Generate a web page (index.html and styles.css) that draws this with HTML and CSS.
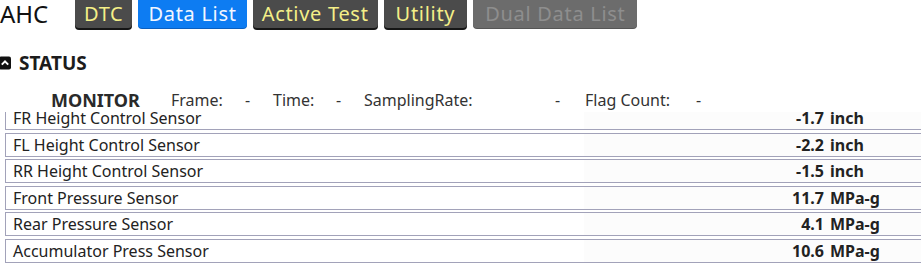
FILE: index.html
```html
<!DOCTYPE html>
<html>
<head>
    <title>AHC Data List</title>
    <link rel="stylesheet" href="styles.css">
</head>
<body>

<div class="topbar">
    <span class="title">AHC</span>
    <button class="tab">DTC</button>
    <button class="tab active">Data List</button>
    <button class="tab">Active Test</button>
    <button class="tab utility">Utility</button>
    <button class="tab disabled">Dual Data List</button>
</div>

<div class="section-head">
    <svg class="toggle" width="12" height="14" viewBox="0 0 12 14">
        <rect x="0" y="0.5" width="12" height="13" rx="2" fill="#111"/>
        <polyline points="2.8,8.6 6,5.4 9.2,8.6" fill="none" stroke="#fff" stroke-width="2"/>
    </svg>
    <span>STATUS</span>
</div>

<div class="monitor">
    <div class="monitor-head">
        <span class="monitor-title">MONITOR</span>
        <span class="stat-label frame">Frame:</span><span class="stat-val">-</span>
        <span class="stat-label time">Time:</span><span class="stat-val">-</span>
        <span class="stat-label rate">SamplingRate:</span><span class="stat-val wide">-</span>
        <span class="stat-label flags">Flag Count:</span><span class="stat-val">-</span>
    </div>

    <div class="rows">
        <div class="row">
            <span class="name">FR Height Control Sensor</span>
            <span class="value"><span class="num">-1.7</span><span class="unit">inch</span></span>
        </div>
        <div class="row">
            <span class="name">FL Height Control Sensor</span>
            <span class="value"><span class="num">-2.2</span><span class="unit">inch</span></span>
        </div>
        <div class="row">
            <span class="name">RR Height Control Sensor</span>
            <span class="value"><span class="num">-1.5</span><span class="unit">inch</span></span>
        </div>
        <div class="row">
            <span class="name">Front Pressure Sensor</span>
            <span class="value"><span class="num">11.7</span><span class="unit">MPa-g</span></span>
        </div>
        <div class="row">
            <span class="name">Rear Pressure Sensor</span>
            <span class="value"><span class="num">4.1</span><span class="unit">MPa-g</span></span>
        </div>
        <div class="row">
            <span class="name">Accumulator Press Sensor</span>
            <span class="value"><span class="num">10.6</span><span class="unit">MPa-g</span></span>
        </div>
    </div>
</div>

</body>
</html>
```

FILE: styles.css
```css
body {
    font-family: "Noto Sans", "Liberation Sans", sans-serif;
    background-color: #fff;
    margin: 0;
    padding: 0;
    color: #222;
    overflow: hidden;
}

.topbar {
    display: flex;
    align-items: flex-start;
    height: 30px;
}

.title {
    width: 75px;
    font-size: 24px;
    line-height: 28px;
    color: #111;
}

.tab {
    font-family: inherit;
    font-size: 20px;
    letter-spacing: 0.7px;
    line-height: 28px;
    height: 28px;
    padding: 0 9px;
    margin-right: 6px;
    border: none;
    border-radius: 0 0 4px 4px;
    background-color: #4b4b4b;
    color: #f4ef88;
    box-shadow: 0 2px 0 #151515;
    cursor: pointer;
}

.tab.active {
    padding: 0 10px;
    background-color: #0d7cf2;
    color: #f2f6ff;
    box-shadow: 0 1px 0 #0a5fc0;
}

.tab.utility {
    padding: 0 12px;
}

.tab.disabled {
    padding: 0 12px;
    background-color: #6c6c6c;
    color: #8e8e8e;
    box-shadow: 0 1px 0 #555;
    cursor: default;
}

.section-head {
    display: flex;
    align-items: center;
    margin-top: 22px;
    height: 22px;
    font-size: 19px;
    font-weight: bold;
    color: #1c1c1c;
}

.toggle {
    margin-left: -1px;
    margin-right: 8px;
}

.monitor-head {
    position: relative;
    z-index: 1;
    display: flex;
    padding-top: 14px;
    line-height: 24px;
    height: 24px;
    background-color: #fff;
    font-size: 16px;
    color: #333;
}

.monitor-title {
    width: 120px;
    padding-left: 51px;
    font-size: 18px;
    font-weight: bold;
    color: #2a2a2a;
}

.stat-label.frame { width: 74px; }
.stat-label.time { width: 63px; }
.stat-label.rate { width: 191px; }
.stat-label.flags { width: 111px; }

.stat-val {
    width: 28px;
}

.stat-val.wide {
    width: 30px;
}

.rows {
    margin-top: -6px;
    margin-left: 5px;
}

.row {
    display: flex;
    height: 22px;
    line-height: 22px;
    border: 1px solid #a2a2b9;
    border-right: none;
    margin-bottom: 2.5px;
    font-size: 16px;
}

.name {
    width: 571px;
    padding-left: 7px;
}

.value {
    flex: 1;
    display: flex;
    background-color: #fcfcfc;
    font-weight: bold;
}

.num {
    width: 240px;
    text-align: right;
}

.unit {
    margin-left: 6px;
}
```
